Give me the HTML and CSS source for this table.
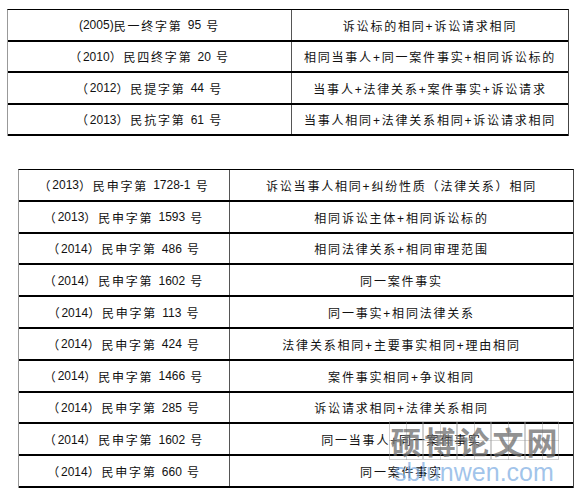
FILE: index.html
```html
<!DOCTYPE html>
<html lang="zh-CN">
<head>
<meta charset="utf-8">
<title>案例对比</title>
<link rel="stylesheet" href="styles.css">
</head>
<body>
<div class="page">
  <div class="table t1">
    <div class="row"><div class="cell c1"><span class="n">(2005)</span>民一终字第 <span class="n">95</span> 号</div><div class="cell">诉讼标的相同+诉讼请求相同</div></div>
    <div class="row"><div class="cell c1">（<span class="n">2010</span>）民四终字第 <span class="n">20</span> 号</div><div class="cell">相同当事人+同一案件事实+相同诉讼标的</div></div>
    <div class="row"><div class="cell c1">（<span class="n">2012</span>）民提字第 <span class="n">44</span> 号</div><div class="cell">当事人+法律关系+案件事实+诉讼请求</div></div>
    <div class="row"><div class="cell c1">（<span class="n">2013</span>）民抗字第 <span class="n">61</span> 号</div><div class="cell">当事人相同+法律关系相同+诉讼请求相同</div></div>
  </div>

  <div class="table t2">
    <div class="row"><div class="cell c1">（<span class="n">2013</span>）民申字第 <span class="n">1728-1</span> 号</div><div class="cell">诉讼当事人相同+纠纷性质（法律关系）相同</div></div>
    <div class="row"><div class="cell c1">（<span class="n">2013</span>）民申字第 <span class="n">1593</span> 号</div><div class="cell">相同诉讼主体+相同诉讼标的</div></div>
    <div class="row"><div class="cell c1">（<span class="n">2014</span>）民申字第 <span class="n">486</span> 号</div><div class="cell">相同法律关系+相同审理范围</div></div>
    <div class="row"><div class="cell c1">（<span class="n">2014</span>）民申字第 <span class="n">1602</span> 号</div><div class="cell">同一案件事实</div></div>
    <div class="row"><div class="cell c1">（<span class="n">2014</span>）民申字第 <span class="n">113</span> 号</div><div class="cell">同一事实+相同法律关系</div></div>
    <div class="row"><div class="cell c1">（<span class="n">2014</span>）民申字第 <span class="n">424</span> 号</div><div class="cell">法律关系相同+主要事实相同+理由相同</div></div>
    <div class="row"><div class="cell c1">（<span class="n">2014</span>）民申字第 <span class="n">1466</span> 号</div><div class="cell">案件事实相同+争议相同</div></div>
    <div class="row"><div class="cell c1">（<span class="n">2014</span>）民申字第 <span class="n">285</span> 号</div><div class="cell">诉讼请求相同+法律关系相同</div></div>
    <div class="row"><div class="cell c1">（<span class="n">2014</span>）民申字第 <span class="n">1602</span> 号</div><div class="cell">同一当事人+同一案件事实</div></div>
    <div class="row"><div class="cell c1">（<span class="n">2014</span>）民申字第 <span class="n">660</span> 号</div><div class="cell">同一案件事实</div></div>
  </div>
</div>

<div class="watermark">
  <div class="wm-chars">
    <span class="wm-box">硕</span><span class="wm-box">博</span><span class="wm-box">论</span><span class="wm-box">文</span><span class="wm-box">网</span>
  </div>
  <div class="wm-url">sblunwen.com</div>
</div>
</body>
</html>
```

FILE: styles.css
```css
html, body {
  margin: 0;
  padding: 0;
  background: #fff;
}

body {
  position: relative;
  width: 578px;
  height: 494px;
  overflow: hidden;
  font-family: "Liberation Sans", "Noto Sans CJK SC", sans-serif;
  font-size: 12px;
  color: #111;
}

.page {
  padding-top: 9px;
}

.table {
  box-sizing: border-box;
  border-top: 1px solid #000;
  border-left: 1px solid #999;
  border-right: 1px solid #444;
}

.t1 {
  margin-left: 7px;
  width: 562px;
}

.t2 {
  margin-top: 33px;
  margin-left: 18px;
  width: 556px;
}

.row {
  display: grid;
  box-sizing: border-box;
  border-bottom: 2px solid #000;
}

.t1 .row {
  grid-template-columns: 284px 1fr;
  height: 31.5px;
}

.t2 .row {
  grid-template-columns: 211px 1fr;
  height: 31.8px;
}

.cell {
  display: flex;
  align-items: center;
  justify-content: center;
  white-space: pre;
  letter-spacing: 1.8px;
  padding-top: 1px;
}

.c1 {
  border-right: 1px solid #555;
}

.n {
  letter-spacing: 0;
}

.watermark {
  position: absolute;
  left: 389px;
  top: 421px;
  width: 175px;
  pointer-events: none;
}

.wm-chars {
  display: flex;
}

.wm-box {
  box-sizing: border-box;
  width: 34px;
  height: 39px;
  display: flex;
  align-items: center;
  justify-content: center;
  border: 1px solid rgba(150, 150, 150, 0.45);
  margin-right: 0;
  font-family: "Noto Sans CJK SC", sans-serif;
  font-weight: 700;
  font-size: 31px;
  line-height: 1;
  color: rgba(110, 110, 110, 0.75);
  background-image:
    linear-gradient(to right, transparent 16px, rgba(150,150,150,0.4) 16px, rgba(150,150,150,0.4) 17px, transparent 17px),
    linear-gradient(to bottom, transparent 18px, rgba(150,150,150,0.4) 18px, rgba(150,150,150,0.4) 19px, transparent 19px);
}

.wm-url {
  margin-top: -2px;
  margin-left: 5px;
  font-family: "Liberation Sans", sans-serif;
  font-size: 25px;
  line-height: 28px;
  color: rgba(120, 170, 225, 0.7);
  letter-spacing: 0;
}
```
